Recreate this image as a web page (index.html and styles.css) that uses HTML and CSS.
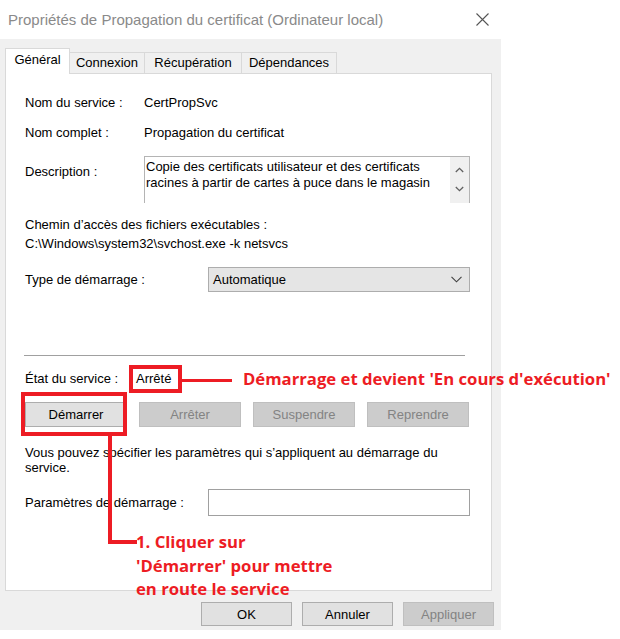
FILE: index.html
```html
<!DOCTYPE html>
<html lang="fr">
<head>
<meta charset="utf-8">
<title>Propriétés</title>
<link rel="stylesheet" href="styles.css">
</head>
<body>
<div class="page">
  <div class="dialog">
    <div class="titlebar">
      <span class="title">Propriétés de Propagation du certificat (Ordinateur local)</span>
      <svg class="close" width="13" height="13" viewBox="0 0 13 13"><path d="M0.5 0.5 L12.5 12.5 M12.5 0.5 L0.5 12.5" stroke="#555" stroke-width="1.1" fill="none"/></svg>
    </div>
    <div class="body">
      <div class="tabs">
        <div class="tab active t-general">Général</div>
        <div class="tab t-connexion">Connexion</div>
        <div class="tab t-recup">Récupération</div>
        <div class="tab t-dep">Dépendances</div>
      </div>
      <div class="panel">
        <div class="row r1"><span class="label">Nom du service :</span><span>CertPropSvc</span></div>
        <div class="row r2"><span class="label">Nom complet :</span><span>Propagation du certificat</span></div>
        <div class="row desc">
          <span class="label desc-label">Description :</span>
          <div class="textbox">
            <div class="textbox-text">Copie des certificats utilisateur et des certificats racines à partir de cartes à puce dans le magasin</div>
            <div class="scroll">
              <svg width="9" height="6" viewBox="0 0 9 6"><path d="M0.8 5 L4.5 1.3 L8.2 5" stroke="#606060" stroke-width="1.3" fill="none"/></svg>
              <svg width="9" height="6" viewBox="0 0 9 6"><path d="M0.8 1 L4.5 4.7 L8.2 1" stroke="#606060" stroke-width="1.3" fill="none"/></svg>
            </div>
          </div>
        </div>
        <div class="path-label">Chemin d’accès des fichiers exécutables :</div>
        <div class="path">C:\Windows\system32\svchost.exe -k netsvcs</div>
        <div class="row type">
          <span class="label wide">Type de démarrage :</span>
          <div class="select"><span>Automatique</span>
            <svg width="11" height="7" viewBox="0 0 11 7"><path d="M0.5 0.8 L5.5 5.8 L10.5 0.8" stroke="#404040" stroke-width="1.1" fill="none"/></svg>
          </div>
        </div>
        <div class="separator"></div>
        <div class="row state"><span class="label state-label">État du service :</span><span>Arrêté</span></div>
        <div class="buttons">
          <div class="btn">Démarrer</div>
          <div class="btn disabled">Arrêter</div>
          <div class="btn disabled">Suspendre</div>
          <div class="btn disabled">Reprendre</div>
        </div>
        <p class="hint">Vous pouvez spécifier les paramètres qui s’appliquent au démarrage du service.</p>
        <div class="row params">
          <span class="label wide">Paramètres de démarrage :</span>
          <div class="input"></div>
        </div>
      </div>
      <div class="footer">
        <div class="btn fbtn">OK</div>
        <div class="btn fbtn">Annuler</div>
        <div class="btn fbtn disabled">Appliquer</div>
      </div>
    </div>
  </div>

  <div class="mark box-state"></div>
  <div class="mark line-state"></div>
  <div class="note note-state">Démarrage et devient 'En cours d'exécution'</div>
  <div class="mark box-start"></div>
  <div class="mark vline"></div>
  <div class="mark hline"></div>
  <div class="note note-start">1. Cliquer sur<br>'Démarrer' pour mettre<br>en route le service</div>
</div>
</body>
</html>
```

FILE: styles.css
```css
* { box-sizing: border-box; }
body {
  margin: 0;
  background: #fff;
  font-family: "Liberation Sans", Arial, sans-serif;
  font-size: 13px;
  color: #000;
}
.page { position: relative; width: 620px; height: 639px; }
.dialog {
  width: 501px;
  height: 630px;
  background: #f0f0f0;
  display: flex;
  flex-direction: column;
}
.titlebar {
  height: 39px;
  background: #fff;
  display: flex;
  align-items: center;
  justify-content: space-between;
  padding: 0 12px 0 8px;
}
.title { font-size: 15px; color: #8a8a8a; }
.close { display: block; }

.body { padding: 9px 7px 0 5px; }
.tabs {
  display: flex;
  align-items: flex-end;
  height: 26px;
  position: relative;
  z-index: 1;
}
.tab {
  height: 21px;
  margin-bottom: 1px;
  border: 1px solid #d9d9d9;
  border-bottom: none;
  border-left: none;
  background: #f0f0f0;
  display: flex;
  align-items: center;
  justify-content: center;
  line-height: 16px;
}
.tab.active {
  height: 26px;
  margin-bottom: 0;
  padding-bottom: 4px;
  border-left: 1px solid #d9d9d9;
  background: #fff;
}
.t-general { width: 65px; }
.t-connexion { width: 75px; }
.t-recup { width: 97px; }
.t-dep { width: 95px; }
.panel {
  margin-top: -1px;
  width: 487px;
  height: 518px;
  background: #fff;
  border: 1px solid #d9d9d9;
  padding: 21px 21px 0 19px;
}
.row { display: flex; align-items: center; line-height: 16px; }
.label { width: 119px; flex: none; }
.label.wide { width: 183px; }
.r2 { margin-top: 14px; }
.desc { margin-top: 15px; align-items: flex-start; }
.desc-label { margin-top: 8px; }
.textbox {
  width: 326px;
  height: 47px;
  border: 1px solid #b4b4b4;
  border-bottom: none;
  display: flex;
}
.textbox-text {
  flex: 1;
  padding: 2px 2px 0 1px;
  line-height: 16px;
}
.scroll {
  width: 19px;
  background: #f0f0f0;
  display: flex;
  flex-direction: column;
  align-items: center;
  gap: 13px;
  padding-top: 10px;
}
.scroll svg { display: block; }
.path-label { margin-top: 14px; line-height: 16px; }
.path { margin-top: 3px; line-height: 16px; }
.type { margin-top: 15px; }
.select {
  width: 262px;
  height: 25px;
  background: #e5e5e5;
  border: 1px solid #adadad;
  display: flex;
  align-items: center;
  justify-content: space-between;
  padding: 0 7px 0 4px;
}
.separator {
  margin: 63px 0 0 -1px;
  width: 441px;
  height: 1px;
  background: #a0a0a0;
}
.state { margin-top: 15px; }
.state-label { width: 111px; }
.buttons { display: flex; gap: 12px; margin-top: 15px; }
.btn {
  width: 102px;
  height: 25px;
  background: #e1e1e1;
  border: 1px solid #adadad;
  display: flex;
  align-items: center;
  justify-content: center;
  color: #000;
}
.btn.disabled {
  background: #cccccc;
  border-color: #bfbfbf;
  color: #838383;
}
.hint { margin: 18px 0 0; line-height: 15px; width: 430px; }
.params { margin-top: 14px; }
.input {
  width: 262px;
  height: 27px;
  border: 1px solid #a0a0a0;
  background: #fff;
}
.footer {
  display: flex;
  justify-content: flex-end;
  gap: 10px;
  margin-top: 11px;
}
.fbtn { width: 91px; height: 24px; }

.mark { position: absolute; }
.box-state { left: 129px; top: 365px; width: 53px; height: 28px; border: 4px solid #ed1c24; }
.line-state { left: 182px; top: 379px; width: 50px; height: 3px; background: #ed1c24; }
.box-start { left: 21px; top: 392px; width: 106px; height: 44px; border: 4px solid #ed1c24; }
.vline { left: 108px; top: 435px; width: 4px; height: 109px; background: #ed1c24; }
.hline { left: 108px; top: 540px; width: 29px; height: 4px; background: #ed1c24; }
.note {
  position: absolute;
  font-family: "Open Sans", "Noto Sans", sans-serif;
  font-weight: 700;
  color: #ed1c24;
  white-space: nowrap;
}
.note-state { left: 243px; top: 368px; font-size: 16.7px; line-height: 22px; }
.note-start { left: 136px; top: 530px; font-size: 16.7px; line-height: 23.5px; }
```
